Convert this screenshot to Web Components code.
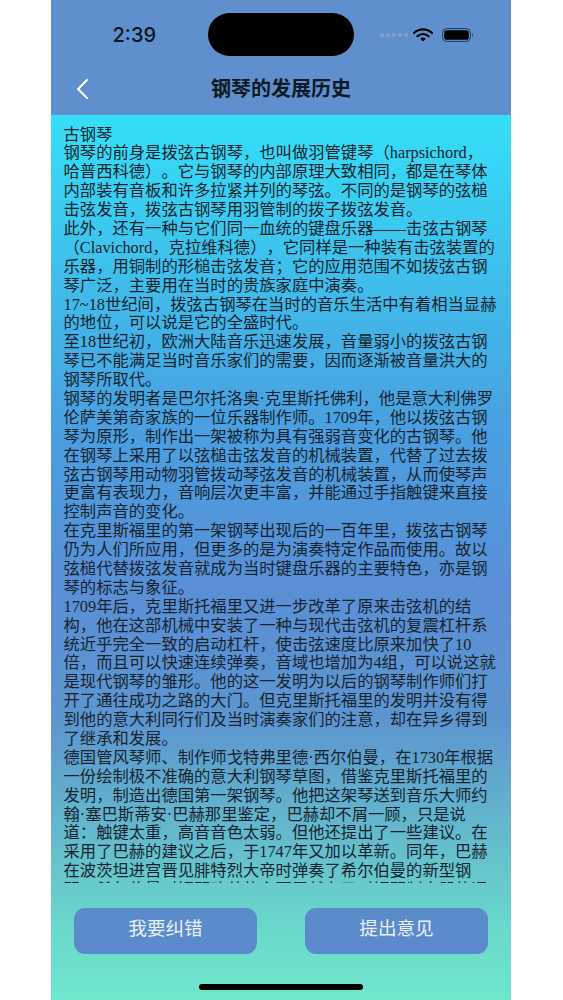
<!DOCTYPE html>
<html lang="zh"><head><meta charset="utf-8"><title>钢琴的发展历史</title>
<style>html,body{margin:0;padding:0;background:#fff}</style></head>
<body>
<app-phone>
  <status-bar slot="status"></status-bar>
  <nav-bar slot="nav" title="钢琴的发展历史"></nav-bar>
  <article-text slot="body"></article-text>
  <action-button slot="actions">我要纠错</action-button>
  <action-button slot="actions">提出意见</action-button>
</app-phone>
<script>
const SANS='"Inter","Noto Sans CJK SC",sans-serif';
function def(name,html,init){
  customElements.define(name,class extends HTMLElement{
    constructor(){super();this.attachShadow({mode:'open'}).innerHTML=html;}
    connectedCallback(){if(init)init(this);}
  });
}
def('app-phone',`<style>
:host{display:block;width:460px;height:1000px;margin:0 auto 0 51px}
.f{height:100%;display:flex;flex-direction:column;background:linear-gradient(180deg,#5f90cd 0,#5f90cd 115px,#34dff7 115px,#4a9fe0 430px,#5a8fd6 590px,#5d95cf 720px,#6ad9cb 930px,#70e6cc 1000px)}
.body{height:768px;overflow:hidden;flex:none}
.actions{display:flex;justify-content:space-between;padding:25px 23px 0;flex:none}
.home{margin:30px auto 0;width:164px;height:6px;border-radius:3px;background:#000;flex:none}
</style><div class="f"><slot name="status"></slot><slot name="nav"></slot>
<div class="body"><slot name="body"></slot></div>
<div class="actions"><slot name="actions"></slot></div><div class="home"></div></div>`);
def('status-bar',`<style>
:host{display:grid;grid-template-columns:1fr 146px 1fr;height:69px;box-sizing:border-box;padding-top:13px;font-family:${SANS}}
.t{font-size:20px;font-weight:500;color:#0d1622;height:43px;line-height:44px;padding-left:61.5px}
.i{height:43px;background:#000;border-radius:22px}
.r{display:flex;align-items:center;height:43px;padding-left:26px}
.d{display:flex;gap:2px;width:33px;padding-top:1px}.d b{width:4px;height:4px;border-radius:1px;background:#7f9fc8}
svg{display:block}
</style><div class="t">2:39</div><div class="i"></div>
<div class="r"><div class="d"><b></b><b></b><b></b><b></b><b></b></div>
<svg width="20" height="14" viewBox="0 0 20 14" style="margin-right:9px"><path d="M1 5a13 13 0 0 1 18 0" fill="none" stroke="#000" stroke-width="2.2" stroke-linecap="round"/><path d="M4.4 8.2a8.2 8.2 0 0 1 11.2 0" fill="none" stroke="#000" stroke-width="2.2" stroke-linecap="round"/><path d="M10 13.6 7.2 10.8a4 4 0 0 1 5.6 0z" fill="#000"/></svg>
<svg width="32" height="14" viewBox="0 0 32 14"><rect x=".6" y=".6" width="27.8" height="12.8" rx="4" fill="none" stroke="#1f3a5e" stroke-width="1"/><rect x="2.2" y="2.2" width="24.6" height="9.6" rx="2.6" fill="#000"/><path d="M30 5v4a2 2 0 0 0 1-2 2 2 0 0 0-1-2z" fill="#2c4a70"/></svg>
</div>`);
def('nav-bar',`<style>
:host{display:flex;align-items:center;justify-content:center;height:46px;position:relative;font-family:${SANS}}
h1{margin:0;font-size:20px;font-weight:700;color:#101a26;line-height:1;transform:translateY(-3px)}
svg{position:absolute;left:24px;top:9px}
</style><svg width="14" height="22" viewBox="0 0 14 22"><path d="M12 2 3 11l9 9" fill="none" stroke="#fff" stroke-width="2.1" stroke-linecap="round" stroke-linejoin="round"/></svg><h1></h1>`,
el=>{el.shadowRoot.querySelector('h1').textContent=el.getAttribute('title');});
const lines=`古钢琴
钢琴的前身是拨弦古钢琴，也叫做羽管键琴（harpsichord，
哈普西科德）。它与钢琴的内部原理大致相同，都是在琴体
内部装有音板和许多拉紧并列的琴弦。不同的是钢琴的弦槌
击弦发音，拨弦古钢琴用羽管制的拨子拨弦发音。
此外，还有一种与它们同一血统的键盘乐器——击弦古钢琴
（Clavichord，克拉维科德），它同样是一种装有击弦装置的
乐器，用铜制的形槌击弦发音；它的应用范围不如拨弦古钢
琴广泛，主要用在当时的贵族家庭中演奏。
17~18世纪间，拨弦古钢琴在当时的音乐生活中有着相当显赫
的地位，可以说是它的全盛时代。
至18世纪初，欧洲大陆音乐迅速发展，音量弱小的拨弦古钢
琴已不能满足当时音乐家们的需要，因而逐渐被音量洪大的
钢琴所取代。
钢琴的发明者是巴尔托洛奥·克里斯托佛利，他是意大利佛罗
伦萨美第奇家族的一位乐器制作师。1709年，他以拨弦古钢
琴为原形，制作出一架被称为具有强弱音变化的古钢琴。他
在钢琴上采用了以弦槌击弦发音的机械装置，代替了过去拨
弦古钢琴用动物羽管拨动琴弦发音的机械装置，从而使琴声
更富有表现力，音响层次更丰富，并能通过手指触键来直接
控制声音的变化。
在克里斯福里的第一架钢琴出现后的一百年里，拨弦古钢琴
仍为人们所应用，但更多的是为演奏特定作品而使用。故以
弦槌代替拨弦发音就成为当时键盘乐器的主要特色，亦是钢
琴的标志与象征。
1709年后，克里斯托福里又进一步改革了原来击弦机的结
构，他在这部机械中安装了一种与现代击弦机的复震杠杆系
统近乎完全一致的启动杠杆，使击弦速度比原来加快了10
倍，而且可以快速连续弹奏，音域也增加为4组，可以说这就
是现代钢琴的雏形。他的这一发明为以后的钢琴制作师们打
开了通往成功之路的大门。但克里斯托福里的发明并没有得
到他的意大利同行们及当时演奏家们的注意，却在异乡得到
了继承和发展。
德国管风琴师、制作师戈特弗里德·西尔伯曼，在1730年根据
一份绘制极不准确的意大利钢琴草图，借鉴克里斯托福里的
发明，制造出德国第一架钢琴。他把这架琴送到音乐大师约
翰·塞巴斯蒂安·巴赫那里鉴定，巴赫却不屑一顾，只是说
道：触键太重，高音音色太弱。但他还提出了一些建议。在
采用了巴赫的建议之后，于1747年又加以革新。同年，巴赫
在波茨坦进宫晋见腓特烈大帝时弹奏了希尔伯曼的新型钢
琴。希尔伯曼对钢琴改革的主要贡献在于对钢琴制音器的运`.split('\n');
def('article-text',`<style>
:host{display:block;padding:10.5px 0 0 12.5px;font:16.32px/18.9px "Liberation Serif","Noto Sans CJK SC",serif;color:#17242f;font-weight:400;font-kerning:none;text-spacing-trim:space-all;font-feature-settings:"palt" 0,"chws" 0,"kern" 0}
div{white-space:nowrap;height:18.9px}
</style><section></section>`,
el=>{const s=el.shadowRoot.querySelector('section');if(s.children.length)return;lines.forEach(t=>{const d=document.createElement('div');d.textContent=t;s.appendChild(d);});});
def('action-button',`<style>
:host{display:flex;align-items:center;justify-content:center;width:183px;height:46px;border-radius:11px;background:#5c8bcb;color:#e9f1f6;font:18.6px/1 ${SANS};padding-bottom:6px;box-sizing:border-box}
</style><slot></slot>`);
</script>
</body></html>
